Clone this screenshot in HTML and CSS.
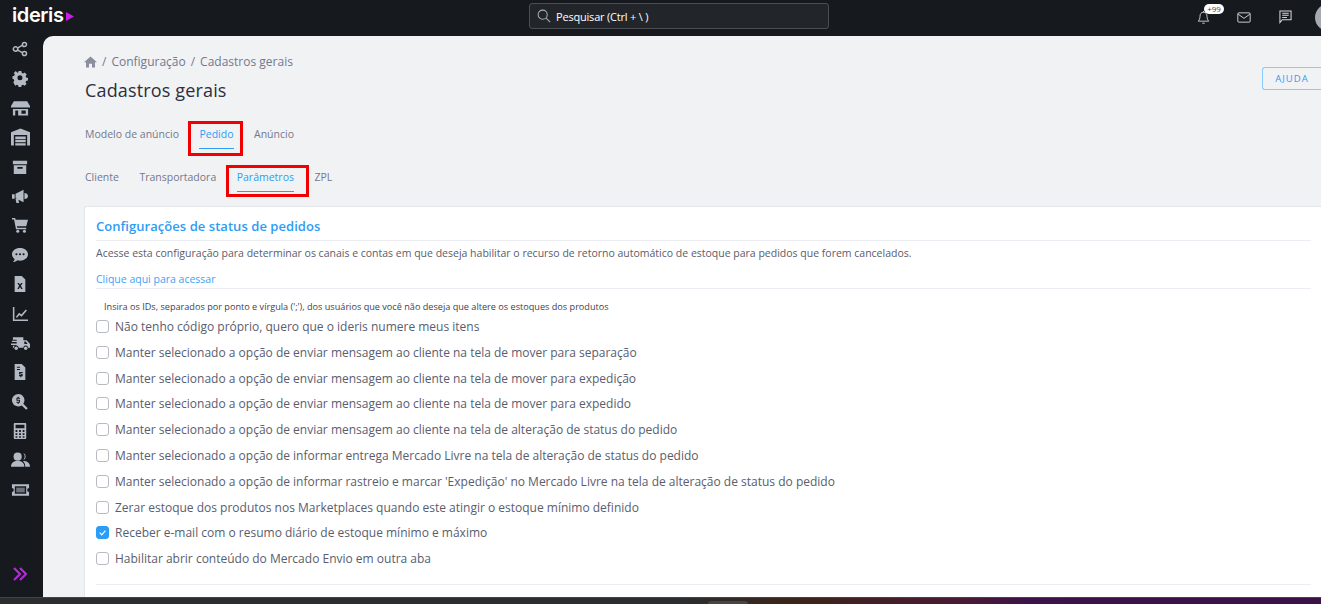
FILE: index.html
```html
<!DOCTYPE html>
<html lang="pt-BR">
<head>
<meta charset="utf-8">
<title>Cadastros gerais</title>
<link rel="stylesheet" href="styles.css">
</head>
<body>
<header class="topbar">
  <div class="logo"><span>ideris</span><svg class="logo-arrow" viewBox="0 0 8 9"><path d="M0 0l8 4.500L0 9z"/></svg></div>
  <div class="search">
    <svg class="search-icon" viewBox="0 0 16 16"><circle cx="6.500" cy="6.500" r="5.200"/><path d="M10.400 10.400L15 15"/></svg>
    <span>Pesquisar (Ctrl + \ )</span>
  </div>
  <div class="top-actions">
    <div class="bell">
      <svg class="top-icon" viewBox="0 0 16 18"><path d="M8 2.500c-3 0-4.300 2.300-4.300 5 0 3-1 4.700-2.200 6h13c-1.200-1.300-2.200-3-2.200-6 0-2.700-1.300-5-4.300-5zM8 1v1.500M6.500 16h3"/></svg>
      <span class="badge">+99</span>
    </div>
    <svg class="top-icon mail" viewBox="0 0 16 13"><rect x=".7" y="1" width="14.600" height="11" rx="1.200"/><path d="M1 2.500l7 5 7-5"/></svg>
    <svg class="top-icon chat" viewBox="0 0 14 15"><path d="M1 1h12v9.500H3.500L1 13.500zM3.500 3.500h7M3.500 5.700h7M3.500 8h5"/></svg>
    <div class="avatar"></div>
  </div>
</header>
<div class="shell">
  <nav class="sidebar">
    <svg class="nav-icon" viewBox="0 0 18 18"><path class="line" d="M6 8l5.500-3M6 10l5.500 3"/><circle class="line" cx="4" cy="9" r="2.500"/><circle class="line" cx="14" cy="4" r="2.300"/><circle class="line" cx="14" cy="14" r="2.300"/></svg>
    <svg class="nav-icon" viewBox="0 0 18 18"><path fill-rule="evenodd" d="M7.300 1h3.400l.5 2.300 1.500.7 2-1.200 2.300 2.400-1.200 2 .6 1.500 2.300.5v0l-.2 3-2.200.6-.6 1.500 1.200 2-2.400 2.200-2-1.200-1.500.6-.5 2.200H7.300l-.5-2.200-1.500-.6-2 1.200L1 14.400l1.200-2-.6-1.500L0 10.300V7.200l2.200-.5.6-1.500-1.200-2L4 1 5.900 3l1-.4zM9 6a3 3 0 100 6 3 3 0 000-6z" transform="translate(.5 .3) scale(.94)"/></svg>
    <svg class="nav-icon wide" viewBox="0 0 20 18"><path fill-rule="evenodd" d="M3 2h14l3 5v1.500H0V7zM2 10h16v7H2zM4.500 11.500V17h3v-5.500zM11 11.500V15h4.500v-3.500z"/></svg>
    <svg class="nav-icon wide" viewBox="0 0 20 18"><path fill-rule="evenodd" d="M10 0l10 4v14h-3V7H3v11H0V4zM4.500 8.500h11V11h-11zM4.500 12h11v2.500h-11zM4.500 15.500h11V18h-11z"/></svg>
    <svg class="nav-icon" viewBox="0 0 18 18"><path fill-rule="evenodd" d="M1 2h16v4H1zM2 7h14v10H2zM6 9v2h6V9z"/></svg>
    <svg class="nav-icon" viewBox="0 0 18 18"><path d="M0 7h3v5H0zM4 6.500L13 2v14l-9-4.500zM14 5.500c2.500 0 4 1.500 4 3.500s-1.500 3.500-4 3.500zM4 12.500h3l1 4.500H5z"/></svg>
    <svg class="nav-icon" viewBox="0 0 18 18"><path d="M0 1h3.500l.6 2H18l-2 7.500H5.500l.4 1.500H16v1.700H4.500L2.300 2.700H0z"/><circle cx="6.500" cy="16" r="1.700"/><circle cx="14" cy="16" r="1.700"/></svg>
    <svg class="nav-icon" viewBox="0 0 18 18"><path fill-rule="evenodd" d="M9 1c5 0 9 3 9 7.200s-4 7.200-9 7.200c-1 0-2-.1-2.900-.4C4.700 16.300 3 17 1 17c1-1 1.800-2.200 1.900-3.600C1 12 0 10.200 0 8.200 0 4 4 1 9 1zM5 7a1.200 1.200 0 100 2.400A1.200 1.200 0 005 7zm4 0a1.200 1.200 0 100 2.400A1.200 1.200 0 009 7zm4 0a1.200 1.200 0 100 2.400A1.200 1.200 0 0013 7z"/></svg>
    <svg class="nav-icon" viewBox="0 0 18 18"><path fill-rule="evenodd" d="M3 0h8l4 4v14H3zM6 8l2 3-2 3.500h1.700L9 12.300l1.300 2.200H12L10 11l2-3h-1.700L9 9.700 7.700 8z"/></svg>
    <svg class="nav-icon" viewBox="0 0 18 18"><path d="M1 1h1.700v14.300H18V17H1z"/><path d="M4.500 12l3.500-4.500 2.500 2L15.500 4l1.300 1.200-6 7-2.500-2-2.800 3.300z"/></svg>
    <svg class="nav-icon wide" viewBox="0 0 20 18"><path fill-rule="evenodd" d="M2 3h11v3h3.500l3.500 4v4h-2a2.500 2.500 0 00-5 0H8a2.500 2.500 0 00-5 0H2v-2h4v-1H0v-1.500h6V8H1V6.500h5V5.500H2zM14 7.500V10h3.500l-2-2.500z"/><circle cx="5.500" cy="14.500" r="1.800"/><circle cx="15.500" cy="14.500" r="1.800"/></svg>
    <svg class="nav-icon" viewBox="0 0 18 18"><path fill-rule="evenodd" d="M3 0h8l4 4v14H3zM5.500 3v1.300H9V3zM5.500 5.500v1.300H9V5.500zM12 9H8v2.700h2.500v.8H8v1.300h1.300V15h1.200v-1.200H12v-2.900H9.500v-.7H12z"/></svg>
    <svg class="nav-icon" viewBox="0 0 18 18"><path fill-rule="evenodd" d="M7 0a7 7 0 015.700 11l5 5-1.800 1.800-5-5A7 7 0 117 0zm-.7 3v1.100H5v3.500h3v1H5v1.200h1.300V11h1.300V9.800H9V6.400H6v-1h3V4.100H7.600V3z"/></svg>
    <svg class="nav-icon" viewBox="0 0 18 18"><path fill-rule="evenodd" d="M3 0h12a1 1 0 011 1v16a1 1 0 01-1 1H3a1 1 0 01-1-1V1a1 1 0 011-1zM4 2v4h10V2zM4 8v2h2V8zM8 8v2h2V8zM12 8v2h2V8zM4 11.500v2h2v-2zM8 11.500v2h2v-2zM12 11.500v2h2v-2zM4 15v1.500h2V15zM8 15v1.500h2V15zM12 15v1.500h2V15z"/></svg>
    <svg class="nav-icon wide" viewBox="0 0 20 18"><circle cx="7" cy="5.500" r="4.300"/><path d="M0 16c0-4 2.500-6 7-6s7 2 7 6z"/><path d="M13 1.700a4 4 0 010 7.400 6 6 0 000-7.400zM15 16c0-2.500-.7-4.500-2.500-6 4.500 0 7.500 2 7.500 6z"/></svg>
    <svg class="nav-icon wide" viewBox="0 0 20 18"><path fill-rule="evenodd" d="M1 3h18v4a2 2 0 000 4v4H1v-4a2 2 0 000-4zM4 5v8h12V5z"/><rect class="dim" x="5.500" y="6.500" width="9" height="5"/></svg>
    <svg class="expand" viewBox="0 0 14 14"><path d="M1 1l6 6-6 6M7 1l6 6-6 6"/></svg>
  </nav>
  <main class="main">
    <div class="title-row">
      <div>
        <div class="breadcrumb">
          <svg class="home" viewBox="0 0 13 11"><path d="M6.500 0L13 5.800h-2V11H8V7.200H5V11H2V5.800H0z"/></svg>
          <span>/</span><span>Configuração</span><span>/</span><span>Cadastros gerais</span>
        </div>
        <h1>Cadastros gerais</h1>
      </div>
      <button class="help">AJUDA</button>
    </div>
    <div class="tabs tabs-primary">
      <span class="tab">Modelo de anúncio</span>
      <span class="tab active marked">Pedido</span>
      <span class="tab">Anúncio</span>
    </div>
    <div class="tabs tabs-secondary">
      <span class="tab">Cliente</span>
      <span class="tab">Transportadora</span>
      <span class="tab active marked">Parâmetros</span>
      <span class="tab">ZPL</span>
    </div>
    <section class="card">
      <h2>Configurações de status de pedidos</h2>
      <p class="desc">Acesse esta configuração para determinar os canais e contas em que deseja habilitar o recurso de retorno automático de estoque para pedidos que forem cancelados.</p>
      <a class="access" href="#">Clique aqui para acessar</a>
      <p class="hint">Insira os IDs, separados por ponto e vírgula (';'), dos usuários que você não deseja que altere os estoques dos produtos</p>
      <ul class="options">
        <li><span class="check"></span>Não tenho código próprio, quero que o ideris numere meus itens</li>
        <li><span class="check"></span>Manter selecionado a opção de enviar mensagem ao cliente na tela de mover para separação</li>
        <li><span class="check"></span>Manter selecionado a opção de enviar mensagem ao cliente na tela de mover para expedição</li>
        <li><span class="check"></span>Manter selecionado a opção de enviar mensagem ao cliente na tela de mover para expedido</li>
        <li><span class="check"></span>Manter selecionado a opção de enviar mensagem ao cliente na tela de alteração de status do pedido</li>
        <li><span class="check"></span>Manter selecionado a opção de informar entrega Mercado Livre na tela de alteração de status do pedido</li>
        <li><span class="check"></span>Manter selecionado a opção de informar rastreio e marcar 'Expedição' no Mercado Livre na tela de alteração de status do pedido</li>
        <li><span class="check"></span>Zerar estoque dos produtos nos Marketplaces quando este atingir o estoque mínimo definido</li>
        <li><span class="check checked"><svg viewBox="0 0 12 12"><path d="M3 6.200l2.200 2.300 4-4.500"/></svg></span>Receber e-mail com o resumo diário de estoque mínimo e máximo</li>
        <li><span class="check"></span>Habilitar abrir conteúdo do Mercado Envio em outra aba</li>
      </ul>
      <div class="card-rule"></div>
    </section>
  </main>
</div>
<div class="taskbar"><span class="task-tab"></span></div>
</body>
</html>
```

FILE: styles.css
```css
* { box-sizing: border-box; }
html, body { height: 100%; }
body {
  margin: 0;
  display: flex;
  flex-direction: column;
  height: 604px;
  overflow: hidden;
  background: #16191e;
  font-family: "Open Sans", "Liberation Sans", sans-serif;
  color: #595d6e;
}
.topbar {
  flex: 0 0 36px;
  display: flex;
  align-items: flex-start;
  background: #16191e;
}
.logo {
  display: flex;
  align-items: center;
  gap: 2px;
  width: 529px;
  margin-top: 1px;
  padding-left: 12px;
  color: #fff;
  font-family: "Inter", "Liberation Sans", sans-serif;
  font-size: 20px;
  font-weight: 600;
  letter-spacing: -.4px;
  line-height: 28px;
}
.logo-arrow { width: 8px; height: 9px; fill: #c71fe8; margin-top: 2px; }
.search {
  width: 300px;
  height: 26px;
  margin-top: 3px;
  display: flex;
  align-items: center;
  gap: 5px;
  padding-left: 7px;
  background: #22262b;
  border: 1px solid #4a4d52;
  border-radius: 3px;
  color: #fff;
  font-size: 11px;
  letter-spacing: -.2px;
}
.search-icon { width: 14px; height: 14px; fill: none; stroke: #a9adb3; stroke-width: 1.200; }
.top-actions {
  margin-left: auto;
  display: flex;
  align-items: center;
  height: 34px;
}
.bell { position: relative; width: 13px; height: 15px; margin-right: 27px; }
.top-icon { display: block; fill: none; stroke: #d5d8dc; stroke-width: 1.100; }
.bell .top-icon { width: 13px; height: 15px; }
.badge {
  position: absolute;
  left: 7px;
  top: -6px;
  width: 20px;
  height: 10px;
  border-radius: 5px;
  background: #fff;
  color: #444;
  font-size: 8px;
  line-height: 10px;
  text-align: center;
}
.mail { width: 14px; height: 11px; margin-right: 28px; }
.chat { width: 13px; height: 14px; margin-right: 23px; }
.avatar { width: 27px; height: 27px; margin-right: -21px; border-radius: 50%; background: #a7abb1; }
.shell { flex: 1; display: flex; min-height: 0; }
.sidebar {
  flex: 0 0 43px;
  display: flex;
  flex-direction: column;
  align-items: center;
  gap: 11.400px;
  padding: 4px 3px 0 0;
  background: #16191e;
}
.nav-icon { flex: none; width: 16px; height: 18px; fill: #b4bac3; }
.nav-icon.wide { width: 19px; }
.nav-icon .line { fill: none; stroke: #b4bac3; stroke-width: 1.700; }
.nav-icon .dim { fill: #6f747c; }
.expand {
  width: 14px;
  height: 14px;
  margin-top: auto;
  margin-bottom: 16px;
  fill: none;
  stroke: #b32bd8;
  stroke-width: 2.200;
}
.main {
  flex: 1;
  min-width: 0;
  padding: 17px 0 0 41px;
  background: #f1f2f4;
  border-radius: 10px 0 0 0;
  overflow: hidden;
}
.title-row { display: flex; justify-content: space-between; }
.breadcrumb {
  display: flex;
  align-items: center;
  gap: 5px;
  height: 17px;
  font-size: 12px;
  color: #74788d;
}
.home { width: 13px; height: 12px; fill: #8b8e9e; }
h1 {
  margin: 7px 0 0;
  padding-left: 1px;
  font-size: 18px;
  font-weight: 400;
  line-height: 26px;
  letter-spacing: .15px;
  color: #2c2e3e;
}
.help {
  width: 59px;
  height: 23px;
  margin-top: 14px;
  padding: 0;
  background: transparent;
  border: 1px solid #8ccafc;
  border-right: 0;
  border-radius: 3px 0 0 3px;
  color: #2d9cf4;
  font: 400 9.500px "Open Sans", sans-serif;
  letter-spacing: 1px;
}
.tabs { display: flex; padding-left: 1px; font-size: 10.500px; }
.tabs-primary { margin-top: 21px; gap: 20.500px; }
.tabs-secondary { margin-top: 18px; gap: 20.500px; }
.tab {
  position: relative;
  display: block;
  height: 25px;
  padding-top: 3px;
  line-height: 15px;
  color: #74788d;
}
.tab.active { color: #2d9cf4; border-bottom: 1px solid #2d9cf4; }
.marked::after {
  content: "";
  position: absolute;
  left: -11px;
  right: -9px;
  top: -3px;
  bottom: -8px;
  border: 3px solid #f00000;
}
.tabs-secondary .marked::after { top: -2px; bottom: -6px; right: -15px; }
.card {
  margin-top: 14px;
  padding: 10px 10px 0 11px;
  min-height: 400px;
  background: #fff;
  border: 1px solid #e6e7ea;
  border-right: 0;
  border-radius: 3px 0 0 0;
}
h2 {
  margin: 0;
  padding-bottom: 5px;
  border-bottom: 1px solid #ebedf2;
  font-size: 13px;
  font-weight: 600;
  line-height: 18px;
  letter-spacing: .05px;
  color: #2d9cf4;
}
.desc {
  margin: 0;
  padding: 4px 0 6px;
  font-size: 10.500px;
  line-height: 16px;
  color: #5a5d6b;
}
.access {
  display: block;
  padding: 4px 0 1px;
  border-bottom: 1px solid #ebedf2;
  font-size: 10.500px;
  line-height: 16px;
  color: #3f9ff5;
  text-decoration: none;
}
.hint {
  margin: 0;
  padding: 12px 0 0 8px;
  font-size: 9.150px;
  line-height: 12px;
  color: #3f4252;
}
.options { margin: .7px 0 0; padding: 0; list-style: none; }
.options li {
  display: flex;
  align-items: center;
  gap: 6px;
  height: 25.800px;
  font-size: 12px;
  color: #595d6e;
  white-space: nowrap;
}
.check {
  flex: none;
  width: 13px;
  height: 13px;
  background: #fff;
  border: 1px solid #b9bbc2;
  border-radius: 3px;
}
.check.checked { background: #2d9cf4; border-color: #2d9cf4; }
.check svg { display: block; width: 11px; height: 11px; fill: none; stroke: #fff; stroke-width: 1.300; }
.card-rule { margin-top: 12px; border-top: 1px solid #ebedf2; }
.taskbar {
  flex: 0 0 7px;
  display: flex;
  padding-left: 708px;
  background: linear-gradient(90deg, #2c2d2f 0, #2c2d2f 52%, #3c2418 60%, #4a1a35 73%, #3b1348 78%, #3a1248 100%);
  border-top: 1px solid #444;
}
.task-tab { width: 40px; height: 3px; margin-top: 3px; background: #454545; border-radius: 3px 3px 0 0; }
```
